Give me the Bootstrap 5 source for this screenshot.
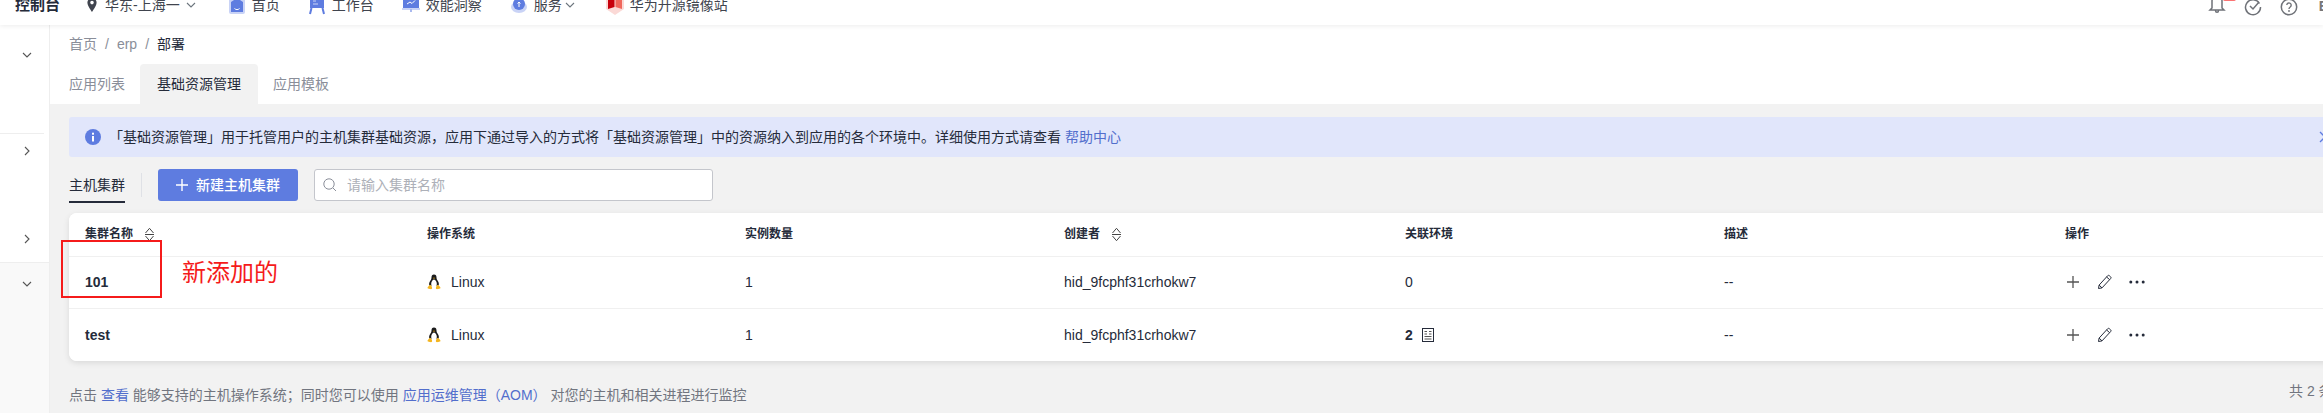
<!DOCTYPE html>
<html lang="zh-CN">
<head>
<meta charset="utf-8">
<title>基础资源管理</title>
<link href="https://cdn.jsdelivr.net/npm/bootstrap@5.3.0/dist/css/bootstrap.min.css" rel="stylesheet">
<style>
html,body{margin:0;height:413px;overflow:hidden;background:#fff}
body{font-family:"Liberation Sans","Noto Sans CJK SC",sans-serif;font-size:14px;line-height:20px;color:#252b3a}
.page-frame{width:2340px;height:413px;position:relative}
.top-bar{height:25px;padding:0 0 10px 15px;background:#fff;box-shadow:0 1px 5px rgba(0,0,0,.08);position:relative;z-index:2;width:2323px}
.top-bar span,.top-bar svg{flex:none}
.brand-name{font-size:15px;font-weight:700;color:#252b3a;margin-right:26px}
.nav-word{color:#40444e}
.nav-icon{width:18px;height:18px;margin-right:6px}
.nav-caret{width:10px;height:10px;margin-left:6px;margin-bottom:5px}
.pin-icon{width:12px;height:14px;margin-right:7px;margin-bottom:3px}
.gap-region{margin-right:32px}
.gap-home{margin-right:28px}
.gap-work{margin-right:28px}
.gap-insight{margin-right:28px}
.serv-caret{margin-left:3px;margin-right:31px}
.tool-zone{margin-left:auto;margin-right:-5px}
.tool-icon{width:18px;height:18px;margin-left:18px;margin-bottom:-1px}
.tool-bell{position:relative;width:18px;height:20px;margin-left:18px}
.bell-dot{position:absolute;left:15px;top:1px;width:13px;height:5px;background:#fb7373;border-radius:2px}
.tool-bell svg{margin:0;display:block}
.tool-cut{margin-left:21px;font-weight:700;color:#777;margin-bottom:-1px}
.side-rail{width:50px;height:388px;border-right:1px solid #eee;background:#fff}
.rail-group{padding-left:22px}
.rail-first{height:109px;padding-top:25px;margin-right:5px;border-bottom:1px solid #eee}
.rail-second{height:128px;padding-top:12px}
.rail-third{flex:1;padding-top:16px;background:#f9f9f9;border-top:1px solid #eee}
.rail-chev{width:10px;height:10px;display:block;color:#555}
.rail-gap{margin-top:78px}
.main-pane{flex:1;min-width:0}
.crumb-row{height:39px;padding:9px 0 0 19px}
.crumb-row .breadcrumb{margin:0;--bs-breadcrumb-divider:"/";--bs-breadcrumb-item-padding-x:8px}
.crumb-row .breadcrumb-item,.crumb-row .breadcrumb-item::before{color:#8a8e99}
.crumb-row .breadcrumb-item.active{color:#252b3a}
.crumb-row .breadcrumb-item+.breadcrumb-item::before{color:#8a8e99}
.tab-strip{height:40px;padding-left:3px;flex-wrap:nowrap;border:0}
.tab-strip .nav-link{padding:10px 16px;color:#8a8e99;border-radius:4px 4px 0 0;height:40px}
.tab-strip .nav-link.active{margin:0 -1px;padding:10px 17px;background:#f2f2f2;color:#252b3a}
.work-area{height:309px;background:#f2f2f2;padding:13px 0 0 19px}
.tip-band{height:40px;background:#e1e6fb;color:#252b3a;padding:0 9px 0 16px;border:0;border-radius:3px 0 0 3px;margin:0}
.tip-info{width:16px;height:16px;margin-right:8px;flex:none}
.tip-close{width:12px;height:12px;margin-left:auto;flex:none}
.tip-band a,.note-line a{color:#526ecc;text-decoration:none}
.tool-row{margin-top:12px;height:32px}
.group-tab{position:relative;width:56px;font-weight:400;color:#252b3a}
.group-tab::after{content:"";position:absolute;left:0;right:0;top:26px;height:2px;background:#252b3a}
.tool-sep{width:1px;height:24px;background:#dfe1e6;margin:0 16px}
.create-btn{width:140px;height:32px;padding:0;background:#5e7ce0;border:0;border-radius:3px;color:#fff;font-size:14px;font-weight:500}
.create-btn:hover{background:#5e7ce0;color:#fff}
.create-btn svg{width:12px;height:12px;margin-right:8px}
.seek-box{width:399px;height:32px;margin-left:16px;position:relative}
.seek-box input{height:32px;border:1px solid #c4c6cc;border-radius:3px;padding:0 10px 0 32px;font-size:14px;background:#fff}
.seek-box input::placeholder{color:#adb0b8}
.seek-box svg{position:absolute;left:9px;top:9px;width:14px;height:14px}
.grid-card{margin-top:12px;border:0;border-radius:8px 0 0 8px;box-shadow:0 2px 6px rgba(0,0,0,.1);overflow:hidden;background:#fff}
.host-table{table-layout:fixed;margin:0;--bs-table-bg:#fff;color:#252b3a;width:100%}
.host-table th,.host-table td{padding:0 0 0 16px;vertical-align:middle;border-bottom:1px solid #f0f0f0;font-size:14px;box-shadow:none}
.host-table th{height:43px;font-size:12px;font-weight:700;color:#252b3a}
.host-table td{height:52px;color:#252b3a}
.host-table tr:last-child td{border-bottom:0;height:53px}
.col-a{width:342px}.col-b{width:318px}.col-c{width:319px}.col-d{width:341px}.col-e{width:319px}.col-f{width:341px}
.sort-mark{width:11px;height:15px;margin-left:11px;vertical-align:-4px}
.tux{width:14px;height:16px;margin-right:10px;vertical-align:-3px}
.sheet-mark{width:12px;height:14px;margin-left:9px;vertical-align:-2px}
.strong-word{font-weight:700}
.op-icon{width:16px;height:16px;display:block}
.op-row{gap:16px;margin-left:0}
.note-row{margin-top:20px}
.note-line{padding-top:4px;color:#71757f}
.count-word{margin-left:auto;width:51px;white-space:nowrap;color:#71757f}
.mark-box{position:absolute;left:61px;top:240px;width:101px;height:58px;border:2px solid #f51b1b;pointer-events:none}
.mark-word{position:absolute;left:182px;top:256px;font-size:24px;line-height:34px;color:#f51b1b;white-space:nowrap}
</style>
</head>
<body>
<svg width="0" height="0" class="position-absolute">
<defs>
<symbol id="down" viewBox="0 0 10 10"><path d="M1 3l4 4 4-4" fill="none" stroke="currentColor" stroke-width="1.1"/></symbol>
<symbol id="right" viewBox="0 0 10 10"><path d="M3 1l4 4-4 4" fill="none" stroke="currentColor" stroke-width="1.1"/></symbol>
<symbol id="plus" viewBox="0 0 16 16"><path d="M8 2v12M2 8h12" stroke="#555" stroke-width="1.3" fill="none"/></symbol>
<symbol id="pen" viewBox="0 0 16 16"><path d="M1.5 14.5l.6-3.4L10.6 1.8a1.2 1.2 0 0 1 1.7-.1l1.3 1.1a1.2 1.2 0 0 1 .1 1.7L5 13.9zM2.1 11.1L5 13.9M9.6 3l3 2.6" fill="none" stroke="#252b3a" stroke-width="1"/></symbol>
<symbol id="dots" viewBox="0 0 16 16"><circle cx="1.8" cy="8" r="1.5" fill="#252b3a"/><circle cx="8" cy="8" r="1.5" fill="#252b3a"/><circle cx="14.2" cy="8" r="1.5" fill="#252b3a"/></symbol>
<symbol id="sort" viewBox="0 0 11 15"><path d="M1.5 6L5.500 1.300 9.500 6M1.500 9l4 4.700 4-4.700M1 7.500h9" fill="none" stroke="#444" stroke-width="1"/></symbol>
<symbol id="penguin" viewBox="0 0 14 16">
<path d="M7 .5c-1.800 0-2.500 1.300-2.500 3 0 1.600-.6 2.400-1.500 3.800C2.200 8.600 1.900 10 2.300 11.500h9.400c.4-1.500.1-2.900-.7-4.200C10.100 5.900 9.500 5.100 9.500 3.500c0-1.700-.7-3-2.500-3z" fill="#1c1c1c"/>
<path d="M7 5.500c-1.500 0-2.800 2.200-2.800 4.600 0 1.500.9 2.500 2.800 2.500s2.800-1 2.800-2.500C9.800 7.700 8.500 5.500 7 5.500z" fill="#fff"/>
<path d="M6 3.700h2L7 5z" fill="#f4b51f"/>
<path d="M3 10.800c-.9.800-2.200 2-2.500 2.900-.2.700 1 .9 2.300 1.300 1 .300 2 .2 2.300-.4.300-.8-.5-3.200-2.100-3.800zM11 10.800c.9.800 2.200 2 2.500 2.900.2.700-1 .9-2.300 1.300-1 .300-2 .2-2.300-.4-.3-.8.500-3.200 2.100-3.800z" fill="#f4b51f"/>
</symbol>
</defs>
</svg>

<div class="page-frame">
  <header class="top-bar d-flex align-items-end">
    <span class="brand-name">控制台</span>
    <svg class="pin-icon" viewBox="0 0 12 14"><path d="M6 0a4.600 4.600 0 0 0-4.600 4.600C1.400 8 6 14 6 14s4.600-6 4.600-9.400A4.600 4.600 0 0 0 6 0zm0 6.400a1.800 1.800 0 1 1 0-3.600 1.800 1.800 0 0 1 0 3.600z" fill="#40444e"/></svg>
    <span class="nav-word">华东-上海一</span>
    <svg class="nav-caret gap-region text-secondary"><use href="#down"/></svg>

    <svg class="nav-icon" viewBox="0 0 18 18"><rect x="1" y="1" width="16" height="16" rx="2" fill="#c9d3f6"/><path d="M9 1L3 5v10h12V5z" fill="#5e7ce0"/><path d="M6.500 11.500c1.500 1.500 3.500 1.500 5 0" stroke="#fff" fill="none"/></svg>
    <span class="nav-word gap-home">首页</span>
    <svg class="nav-icon" viewBox="0 0 18 18"><rect x="2" y="0" width="14" height="11" fill="#5e7ce0"/><path d="M3.500 11l-1.500 6M14.500 11l1.500 6" stroke="#5e7ce0" stroke-width="2"/><path d="M5 4h3M5 7h5" stroke="#c9d3f6"/></svg>
    <span class="nav-word gap-work">工作台</span>
    <svg class="nav-icon" viewBox="0 0 18 18"><rect x="1" y="0" width="16" height="11" fill="#5e7ce0"/><rect x="0" y="11" width="18" height="2" fill="#c9d3f6"/><rect x="8" y="12" width="2" height="3" fill="#a9b9ef"/><path d="M5 7l3-2 2 1.500 3-3" stroke="#fff" fill="none"/></svg>
    <span class="nav-word gap-insight">效能洞察</span>
    <svg class="nav-icon" viewBox="0 0 18 18"><ellipse cx="9" cy="10" rx="8" ry="6" fill="#c9d3f6"/><circle cx="9" cy="7" r="6" fill="#5e7ce0"/><path d="M9 10V5M7.500 6.500L9 5l1.500 1.500" stroke="#fff" fill="none"/></svg>
    <span class="nav-word">服务</span>
    <svg class="nav-caret serv-caret text-secondary"><use href="#down"/></svg>
    <svg class="nav-icon" viewBox="0 0 18 18"><path d="M0 0h18v12l-9 6-9-6z" fill="#fbd9d6"/><path d="M2 0h6.500v10L2 12z" fill="#c7000b"/><path d="M9.500 0H16v12l-6.500-2z" fill="#f0675c"/></svg>
    <span class="nav-word">华为开源镜像站</span>

    <div class="tool-zone d-flex align-items-end">
      <span class="tool-bell">
        <svg width="18" height="20" viewBox="0 0 18 20"><path d="M4 13V6a5 5 0 0 1 10 0v7l2 2H2zM7.500 15.500c0 1 .7 1.800 1.500 1.800s1.500-.8 1.500-1.800" fill="none" stroke="#6f7278" stroke-width="1.500"/></svg>
        <span class="bell-dot"></span>
      </span>
      <svg class="tool-icon" viewBox="0 0 18 18"><path d="M15.500 5.500A7.500 7.500 0 1 0 16.500 9M6 8l3 3 6-7" fill="none" stroke="#6f7278" stroke-width="1.500"/></svg>
      <svg class="tool-icon" viewBox="0 0 18 18"><circle cx="9" cy="9" r="7.700" fill="none" stroke="#6f7278" stroke-width="1.500"/><path d="M6.800 7a2.200 2.200 0 1 1 3.400 2c-.9.600-1.200 1-1.200 2" fill="none" stroke="#6f7278" stroke-width="1.400"/><circle cx="9" cy="13" r=".9" fill="#6f7278"/></svg>
      <span class="tool-cut">E</span>
    </div>
  </header>

  <div class="d-flex">
    <aside class="side-rail d-flex flex-column">
      <div class="rail-group rail-first"><svg class="rail-chev"><use href="#down"/></svg></div>
      <div class="rail-group rail-second">
        <svg class="rail-chev"><use href="#right"/></svg>
        <svg class="rail-chev rail-gap"><use href="#right"/></svg>
      </div>
      <div class="rail-group rail-third"><svg class="rail-chev"><use href="#down"/></svg></div>
    </aside>

    <main class="main-pane">
      <nav class="crumb-row" aria-label="breadcrumb">
        <ol class="breadcrumb">
          <li class="breadcrumb-item">首页</li>
          <li class="breadcrumb-item">erp</li>
          <li class="breadcrumb-item active">部署</li>
        </ol>
      </nav>
      <ul class="nav tab-strip">
        <li class="nav-item"><a class="nav-link" href="#">应用列表</a></li>
        <li class="nav-item"><a class="nav-link active" href="#">基础资源管理</a></li>
        <li class="nav-item"><a class="nav-link" href="#">应用模板</a></li>
      </ul>
      <div class="work-area">
        <div class="alert tip-band d-flex align-items-center" role="alert">
          <svg class="tip-info" viewBox="0 0 16 16"><circle cx="8" cy="8" r="8" fill="#5e7ce0"/><rect x="7" y="7" width="2" height="5.500" fill="#fff"/><rect x="7" y="3.700" width="2" height="2" fill="#fff"/></svg>
          <span>「基础资源管理」用于托管用户的主机集群基础资源，应用下通过导入的方式将「基础资源管理」中的资源纳入到应用的各个环境中。详细使用方式请查看 <a href="#">帮助中心</a></span>
          <svg class="tip-close" viewBox="0 0 12 12"><path d="M1 1l10 10M11 1L1 11" stroke="#5e7ce0" stroke-width="1.300" fill="none"/></svg>
        </div>

        <div class="tool-row d-flex align-items-center">
          <div class="group-tab">主机集群</div>
          <div class="tool-sep"></div>
          <button type="button" class="btn create-btn d-flex align-items-center justify-content-center">
            <svg viewBox="0 0 12 12"><path d="M6 0v12M0 6h12" stroke="#fff" stroke-width="1.400"/></svg>新建主机集群
          </button>
          <div class="seek-box">
            <input class="form-control" type="text" placeholder="请输入集群名称">
            <svg viewBox="0 0 14 14"><circle cx="6" cy="6" r="5.200" fill="none" stroke="#8a8e99"/><path d="M10 10l3 3" stroke="#8a8e99"/></svg>
          </div>
        </div>

        <div class="card grid-card">
          <table class="table host-table">
            <colgroup><col class="col-a"><col class="col-b"><col class="col-c"><col class="col-d"><col class="col-e"><col class="col-f"><col></colgroup>
            <thead>
              <tr>
                <th>集群名称<svg class="sort-mark"><use href="#sort"/></svg></th>
                <th>操作系统</th>
                <th>实例数量</th>
                <th>创建者<svg class="sort-mark"><use href="#sort"/></svg></th>
                <th>关联环境</th>
                <th>描述</th>
                <th>操作</th>
              </tr>
            </thead>
            <tbody>
              <tr>
                <td class="strong-word">101</td>
                <td><svg class="tux"><use href="#penguin"/></svg>Linux</td>
                <td>1</td>
                <td>hid_9fcphf31crhokw7</td>
                <td>0</td>
                <td>--</td>
                <td><div class="d-flex op-row"><svg class="op-icon"><use href="#plus"/></svg><svg class="op-icon"><use href="#pen"/></svg><svg class="op-icon"><use href="#dots"/></svg></div></td>
              </tr>
              <tr>
                <td class="strong-word">test</td>
                <td><svg class="tux"><use href="#penguin"/></svg>Linux</td>
                <td>1</td>
                <td>hid_9fcphf31crhokw7</td>
                <td><span class="strong-word">2</span><svg class="sheet-mark" viewBox="0 0 12 14"><rect x=".5" y=".5" width="11" height="13" fill="none" stroke="#252b3a"/><path d="M2.500 3.500h2.500M7 3.500h2.500M2.500 6h2.500M7 6h2.500M2.500 8.500h7M2.500 11h7" stroke="#555"/></svg></td>
                <td>--</td>
                <td><div class="d-flex op-row"><svg class="op-icon"><use href="#plus"/></svg><svg class="op-icon"><use href="#pen"/></svg><svg class="op-icon"><use href="#dots"/></svg></div></td>
              </tr>
            </tbody>
          </table>
        </div>

        <div class="note-row d-flex">
          <div class="note-line">点击 <a href="#">查看</a> 能够支持的主机操作系统；同时您可以使用 <a href="#">应用运维管理（AOM）</a> 对您的主机和相关进程进行监控</div>
          <div class="count-word">共 2 条</div>
        </div>
      </div>
    </main>
  </div>

  <div class="mark-box"></div>
  <div class="mark-word">新添加的</div>
</div>
<script src="https://cdn.jsdelivr.net/npm/bootstrap@5.3.0/dist/js/bootstrap.bundle.min.js"></script>
</body>
</html>
